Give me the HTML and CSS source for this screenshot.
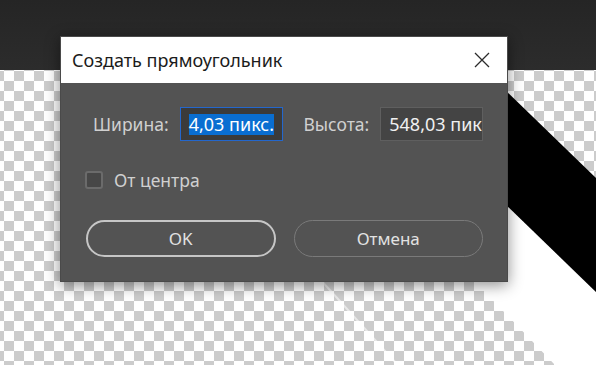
FILE: index.html
```html
<!DOCTYPE html>
<html lang="ru">
<head>
    <meta charset="UTF-8">
    <meta name="viewport" content="width=device-width, initial-scale=1.0">
    <title>Создать прямоугольник</title>
    <link rel="stylesheet" href="styles.css">
</head>
<body>
    <div class="workspace">
        <!-- холст под диалогом -->
        <svg class="backdrop" width="596" height="365" viewBox="0 0 596 365">
            <defs>
                <pattern id="checker" patternUnits="userSpaceOnUse" x="4" y="71" width="20" height="20">
                    <rect width="20" height="20" fill="#ffffff"/>
                    <rect x="10" y="0" width="10" height="10" fill="#cccccc"/>
                    <rect x="0" y="10" width="10" height="10" fill="#cccccc"/>
                </pattern>
                <linearGradient id="topbar" x1="0" y1="0" x2="0" y2="1">
                    <stop offset="0" stop-color="#252525"/>
                    <stop offset="1" stop-color="#2c2c2c"/>
                </linearGradient>
            </defs>
            <rect x="0" y="70" width="596" height="295" fill="url(#checker)"/>
            <polygon points="380,83 596,292 596,365 555,365 380,183" fill="#ffffff"/>
            <polygon points="400,-12 596,178 596,292 400,102" fill="#000000"/>
            <line x1="300" y1="257" x2="405" y2="373" stroke="rgba(255,255,255,0.55)" stroke-width="2"/>
            <rect x="0" y="0" width="596" height="70" fill="url(#topbar)"/>
        </svg>

        <div class="dialog">
            <div class="dialog-title">
                <span>Создать прямоугольник</span>
                <svg class="close-icon" width="16" height="16" viewBox="0 0 16 16">
                    <path d="M1 1 L15 15 M15 1 L1 15" stroke="#2b2b2b" stroke-width="1.3" fill="none"/>
                </svg>
            </div>
            <div class="dialog-body">
                <div class="size-row">
                    <span class="label">Ширина:</span>
                    <div class="field field-active"><span class="selected">4,03 пикс.</span></div>
                    <span class="label label-height">Высота:</span>
                    <div class="field">548,03 пик</div>
                </div>
                <label class="check-row">
                    <span class="checkbox"></span>
                    <span class="label">От центра</span>
                </label>
                <div class="button-row">
                    <button class="btn btn-ok">OK</button>
                    <button class="btn">Отмена</button>
                </div>
            </div>
        </div>
    </div>
</body>
</html>
```

FILE: styles.css
```css
body {
    margin: 0;
    background: #2a2a2a;
    font-family: "Noto Sans", "Open Sans", sans-serif;
}

.workspace {
    position: relative;
    width: 596px;
    height: 365px;
    overflow: hidden;
}

.backdrop {
    position: absolute;
    top: 0;
    left: 0;
    display: block;
}

.dialog {
    position: absolute;
    left: 60px;
    top: 36px;
    width: 446px;
    background: #535353;
    border: 1px solid #4a4a4a;
    box-shadow: 0 3px 14px rgba(0, 0, 0, 0.45);
}

.dialog-title {
    height: 46px;
    background: #ffffff;
    display: flex;
    align-items: center;
    justify-content: space-between;
    padding: 0 17px 0 11px;
    font-size: 18px;
    color: #1b1b1b;
}

.close-icon {
    display: block;
}

.dialog-body {
    padding: 24px 24px 24px 24px;
}

.size-row {
    display: flex;
    align-items: center;
    padding-left: 8px;
}

.label {
    font-size: 17.5px;
    line-height: 18px;
    color: #d0d0d0;
}

.label-height {
    margin-left: 20px;
}

.field {
    box-sizing: border-box;
    width: 104px;
    height: 34px;
    margin-left: 11px;
    padding-left: 8px;
    display: flex;
    align-items: center;
    background: #444444;
    border: 1px solid #5f5f5f;
    color: #f0f0f0;
    font-size: 18px;
    white-space: nowrap;
    overflow: hidden;
}

.field-active {
    width: 105px;
    background: #3b3b3b;
    border-color: #2467cc;
}

.selected {
    background: #0a6ed1;
    color: #ffffff;
    line-height: 21px;
}

.check-row {
    display: flex;
    align-items: center;
    margin-top: 30px;
}

.checkbox {
    box-sizing: border-box;
    width: 18px;
    height: 18px;
    border: 2px solid #6b6b6b;
    border-radius: 3px;
    background: #474747;
    margin-right: 11px;
}

.button-row {
    display: flex;
    gap: 18px;
    margin-top: 31px;
    padding-left: 1px;
}

.btn {
    box-sizing: border-box;
    width: 190px;
    height: 37px;
    border-radius: 19px;
    background: transparent;
    border: 1px solid #7a7a7a;
    color: #e2e2e2;
    font-family: "Noto Sans", "Open Sans", sans-serif;
    font-size: 17px;
    padding: 0;
}

.btn-ok {
    border: 2px solid #c6c6c6;
}
```
